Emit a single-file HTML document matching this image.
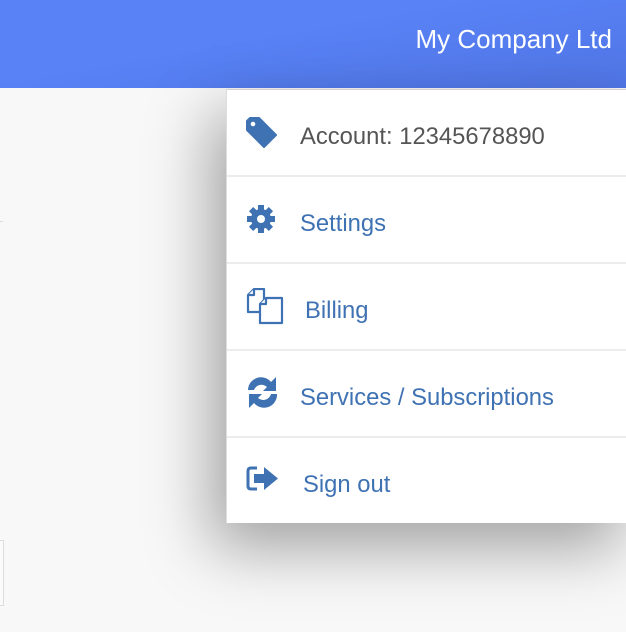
<!DOCTYPE html>
<html><head><style>
*{margin:0;padding:0;box-sizing:border-box}
body{width:626px;height:632px;overflow:hidden;background:#f8f8f8;font-family:"Liberation Sans",Arial,sans-serif;position:relative}
.hdr{position:absolute;left:0;top:0;width:626px;height:88px;background:linear-gradient(170deg,#5882f6 40%,#5176e6 100%);}
.hdr span{position:absolute;right:14px;top:24px;color:#fff;font-size:26px}
.menu{position:absolute;left:226px;top:89px;width:410px;height:434px;background:#fff;border-top:1px solid #d6d0d0;border-left:1px solid #ddd;box-shadow:-15px 25px 60px rgba(0,0,0,0.35)}
.row{height:87px;border-bottom:2px solid #ececec;position:relative}
.row:last-child{border-bottom:none}
.row svg{position:absolute;left:19px;top:27px}
.row span{position:absolute;left:73px;top:33px;font-size:23.8px;color:#3f72b3}
.mark{position:absolute;left:0;top:221px;width:3px;height:1px;background:#ddd}
.box{position:absolute;left:-2px;top:540px;width:6px;height:66px;border:1px solid #ddd;background:#fafafa}
</style></head><body>
<div class="hdr"><span>My Company Ltd</span></div>
<div class="mark"></div><div class="box"></div>
<div class="menu">
<div class="row"><svg width="34" height="34" viewBox="0 0 34 34"><path d="M1 4 L1 13 L18 30 L30 18 L13 1 L4 1 Z" fill="#3f72b3" stroke="#3f72b3" stroke-linejoin="round" stroke-width="2"/><circle cx="7" cy="7" r="2.3" fill="#fff"/></svg><span style="color:#555">Account: 12345678890</span></div>
<div class="row"><svg width="34" height="34" viewBox="0 0 34 34"><g fill="#3f72b3"><circle cx="15" cy="15" r="10"/><rect x="12" y="1" width="6" height="28"/><rect x="1" y="12" width="28" height="6"/><rect x="12" y="1" width="6" height="28" transform="rotate(45 15 15)"/><rect x="12" y="1" width="6" height="28" transform="rotate(-45 15 15)"/></g><circle cx="15" cy="15" r="4" fill="#fff"/></svg><span>Settings</span></div>
<div class="row" ><svg width="40" height="40" viewBox="0 0 40 40" style="top:24px;left:19px"><g fill="#fff" stroke="#3f72b3" stroke-width="2.2" stroke-linejoin="round"><path d="M8 1 H18 V24 H2 V7 Z"/><path d="M2 7 H8 V1"/><path d="M20 10 H36 V35 H14 V16 Z"/><path d="M14 16 H20 V10"/></g></svg><span style="left:78px">Billing</span></div>
<div class="row"><svg width="34" height="34" viewBox="0 0 34 34" style="top:25px"><g fill="#3f72b3"><path d="M2 14 A13 13 0 0 1 25 6 L30 1 V15 H17 L21 11 A8 8 0 0 0 8 14 Z"/><path d="M31 18 A13 13 0 0 1 8 27 L3 32 V18 H16 L12 22 A8 8 0 0 0 25 18 Z"/></g></svg><span>Services / Subscriptions</span></div>
<div class="row"><svg width="36" height="34" viewBox="0 0 36 34" style="top:27px"><path d="M11 3 H5 Q2 3 2 6 V21 Q2 24 5 24 H11" fill="none" stroke="#3f72b3" stroke-width="3"/><path d="M8 9 H18 V2 L32 13.5 L18 25 V18 H8 Z" fill="#3f72b3"/></svg><span style="left:76px">Sign out</span></div>
</div>
</body></html>
